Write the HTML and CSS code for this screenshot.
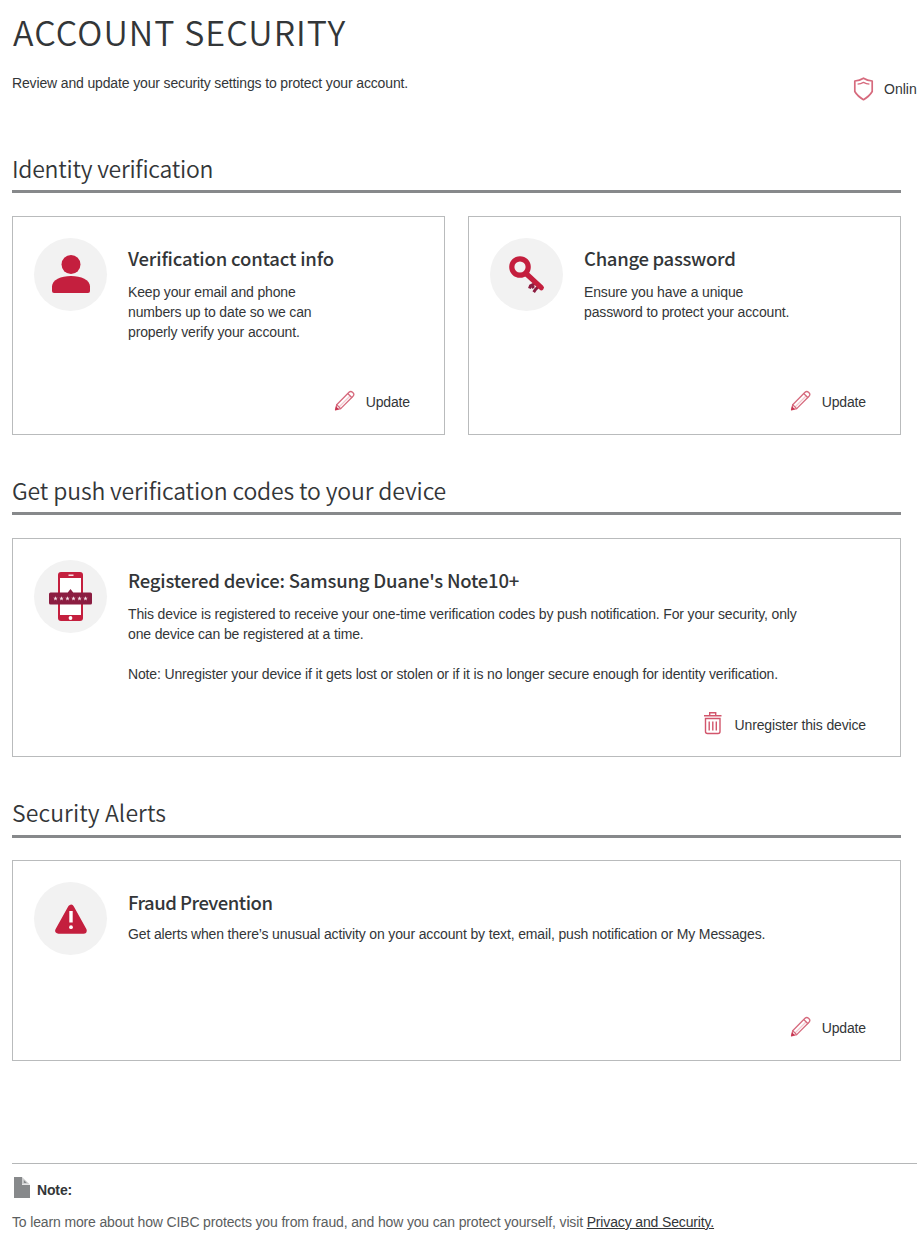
FILE: index.html
```html
<!DOCTYPE html>
<html lang="en">
<head>
<meta charset="utf-8">
<title>Account Security</title>
<link rel="stylesheet" href="styles.css">
</head>
<body>
<svg class="defs" width="0" height="0">
  <symbol id="pencil" viewBox="0 0 22 22">
    <g fill="none" stroke="#d66a7d" stroke-width="1.300" stroke-linejoin="round" stroke-linecap="round">
      <path d="M5.500 16.500L16 6" stroke="#f3c8cf"/>
      <path d="M1.500 19.800l1.200-5L15 2.300a2.500 2.500 0 0 1 3.500 0l.5.500a2.500 2.500 0 0 1 0 3.500L6.700 18.600z"/>
      <path d="M2.700 14.800l4 3.800M14 3.800l3.700 3.700" />
    </g>
    <path d="M1 20.300l1-4 3 3z" fill="#c8334f"/>
  </symbol>
</svg>
<div class="page">
  <h1 class="title">ACCOUNT SECURITY</h1>
  <div class="intro">
    <p class="intro-text">Review and update your security settings to protect your account.</p>
    <a class="guarantee">
      <svg width="22" height="24" viewBox="0 0 22 24" fill="none" stroke="#d66a7d" stroke-width="1.700" stroke-linejoin="round"><path d="M10.500 1.200C7.800 3 5 3.800 1.800 4v10.500c2 3.500 5 6 8.700 8.200 3.700-2.200 6.700-4.700 8.700-8.200V4c-3.200-.2-6-1-8.700-2.800z"/><path d="M4.600 7.200c2.300-.3 4-.9 5.900-1.900 1.900 1 3.600 1.600 5.900 1.900" stroke-width="1.300"/></svg>
      <span>Onlin</span>
    </a>
  </div>

  <h2 class="section-title identity">Identity verification</h2>
  <div class="cards">
    <section class="card">
      <div class="disc"><svg width="73" height="73" viewBox="0 0 73 73" fill="#c41f3e"><circle cx="37" cy="26.500" r="9.500"/><path d="M18 48.500C18 42 27 38 37 38s19 4 19 10.500V53q0 2-2 2H20q-2 0-2-2z"/></svg></div>
      <div class="content">
        <h3 class="card-title contact">Verification contact info</h3>
        <p>Keep your email and phone<br>numbers up to date so we can<br>properly verify your account.</p>
      </div>
      <a class="action"><svg width="22" height="22"><use href="#pencil"/></svg><span>Update</span></a>
    </section>
    <section class="card">
      <div class="disc"><svg width="73" height="73" viewBox="0 0 73 73" fill="none"><path d="M46 45l-5.500 2.800-1 2.700M49 48l-3.500 3.500-1.800 2.700M42.500 48.500l1.300 1.500" stroke="#8b1d41" stroke-width="3"/><circle cx="30" cy="29" r="8.200" stroke="#c41f3e" stroke-width="5.200"/><path d="M36 35.500L51.300 49.700" stroke="#c41f3e" stroke-width="5.200" stroke-linecap="round"/></svg></div>
      <div class="content">
        <h3 class="card-title password">Change password</h3>
        <p>Ensure you have a unique<br>password to protect your account.</p>
      </div>
      <a class="action"><svg width="22" height="22"><use href="#pencil"/></svg><span>Update</span></a>
    </section>
  </div>

  <h2 class="section-title push">Get push verification codes to your device</h2>
  <section class="card">
    <div class="disc"><svg width="73" height="73" viewBox="0 0 73 73"><rect x="24" y="12" width="25" height="49" rx="3" fill="#c41f3e"/><path d="M26 18h21v37H26z" fill="#fff"/><path d="M34.500 15.200h5" stroke="#fff" stroke-width="1.300"/><circle cx="36.500" cy="58" r="1.900" fill="#fff"/><path d="M16.500 32.500h17.300l2.700-3.500 2.700 3.500h17.300q1.500 0 1.500 1.500v9q0 1.500-1.500 1.500h-40Q15 44.500 15 43v-9q0-1.500 1.500-1.500z" fill="#8b1d41"/><defs><path id="star" d="M0-2.300L.6-.7 2.200-.7.9.3 1.400 1.900 0 1-1.400 1.900-.9.300-2.200-.7-.6-.7z" fill="#f5dfe6"/></defs><use href="#star" x="21.500" y="38.500"/><use href="#star" x="27.500" y="38.500"/><use href="#star" x="33.500" y="38.500"/><use href="#star" x="39.500" y="38.500"/><use href="#star" x="45.500" y="38.500"/><use href="#star" x="51.500" y="38.500"/></svg></div>
    <div class="content">
      <h3 class="card-title device">Registered device: Samsung Duane's Note10+</h3>
      <p>This device is registered to receive your one-time verification codes by push notification. For your security, only<br>one device can be registered at a time.<br><br>Note: Unregister your device if it gets lost or stolen or if it is no longer secure enough for identity verification.</p>
    </div>
    <a class="action unregister"><svg width="20" height="24" viewBox="0 0 20 24" fill="none" stroke="#d2566c" stroke-width="1.400"><path d="M1 4.700h17.500M6.700 4.500V1.700h6v2.800M2.500 7.500v13q0 2 2 2h10.500q2 0 2-2v-13z"/><path d="M6.200 10.500v9M9.800 10.500v9M13.300 10.500v9"/></svg><span>Unregister this device</span></a>
  </section>

  <h2 class="section-title alerts">Security Alerts</h2>
  <section class="card short">
    <div class="disc"><svg width="73" height="73" viewBox="0 0 73 73"><path d="M37 26L24.500 48.500h25z" fill="#c41f3e" stroke="#c41f3e" stroke-width="6.500" stroke-linejoin="round"/><path d="M37 29v11.500" stroke="#fff" stroke-width="3.400"/><circle cx="37" cy="45.200" r="1.900" fill="#fff"/></svg></div>
    <div class="content">
      <h3 class="card-title fraud">Fraud Prevention</h3>
      <p>Get alerts when there’s unusual activity on your account by text, email, push notification or My Messages.</p>
    </div>
    <a class="action"><svg width="22" height="22"><use href="#pencil"/></svg><span>Update</span></a>
  </section>

  <footer class="footer">
    <div class="note"><svg width="16" height="21" viewBox="0 0 16 21"><path d="M0 0h8v8h8v13H0z" fill="#87898b"/><path d="M8 0l8 7.500H8z" fill="#cfd0d1"/><path d="M9.800 3l3 3h-3z" fill="#87898b"/></svg><strong>Note:</strong></div>
    <p class="learn">To learn more about how CIBC protects you from fraud, and how you can protect yourself, visit <a class="link">Privacy and Security.</a></p>
  </footer>
</div>
</body>
</html>
```
FILE: styles.css
```css
* { box-sizing: border-box; }
body {
  margin: 0;
  background: #fff;
  color: #333638;
  font: 14px/20px "Liberation Sans", Arial, sans-serif;
  letter-spacing: -0.145px;
  overflow: hidden;
}
h1, h2, h3, p { margin: 0; }
svg { display: block; flex: none; }
.defs { position: absolute; }
.page { padding-left: 12px; height: 1249px; overflow: hidden; }
.title, .section-title, .card-title {
  font-family: "Noto Sans CJK SC", "Noto Sans", sans-serif;
  white-space: nowrap;
}
.title { height: 73px; padding: 7px 0 0 1px; font-size: 34px; line-height: 50px; font-weight: 350; letter-spacing: 1.05px; }
.intro { display: flex; justify-content: space-between; height: 71px; }
.guarantee { display: flex; gap: 9px; width: 64px; padding-top: 4px; white-space: nowrap; }
.guarantee span { line-height: 24px; letter-spacing: 0; }
.section-title {
  width: 889px;
  height: 49px;
  border-bottom: 3px solid #87898b;
  font-size: 23px;
  line-height: 48px;
  font-weight: 350;
}
.identity { letter-spacing: -0.25px; }
.push { line-height: 49px; letter-spacing: -0.14px; }
.alerts { height: 50px; line-height: 49px; letter-spacing: 0.1px; }
.cards { display: flex; gap: 23px; width: 889px; }
.card {
  position: relative;
  display: flex;
  flex: 1;
  gap: 21px;
  width: 889px;
  height: 219px;
  margin: 23px 0 31px;
  padding: 21px;
  border: 1px solid #b9bbbc;
}
.cards .card { width: auto; }
.card.short { height: 201px; margin: 22px 0 102px; }
.disc { flex: none; width: 73px; height: 73px; border-radius: 50%; background: #f2f2f2; }
.content { white-space: nowrap; }
.card-title { height: 44px; font-size: 18.5px; line-height: 40px; font-weight: 500; }
.contact { letter-spacing: -0.16px; }
.password { letter-spacing: -0.3px; }
.device { letter-spacing: -0.2px; }
.fraud { height: 42px; letter-spacing: -0.5px; }
.action { position: absolute; right: 34px; bottom: 21px; display: flex; align-items: flex-start; gap: 10px; line-height: 22px; }
.action span { margin-top: 1px; }
.action.unregister { bottom: 20px; gap: 12px; }
.action.unregister span { margin-top: 3px; }
.footer { border-top: 1px solid #b5b7b8; }
.note { display: flex; align-items: flex-start; gap: 7px; height: 48px; padding: 13px 0 0 2px; }
.note strong { line-height: 26px; }
.learn { color: #5b5e60; white-space: nowrap; }
.link { color: #333638; text-decoration: underline; }
```
